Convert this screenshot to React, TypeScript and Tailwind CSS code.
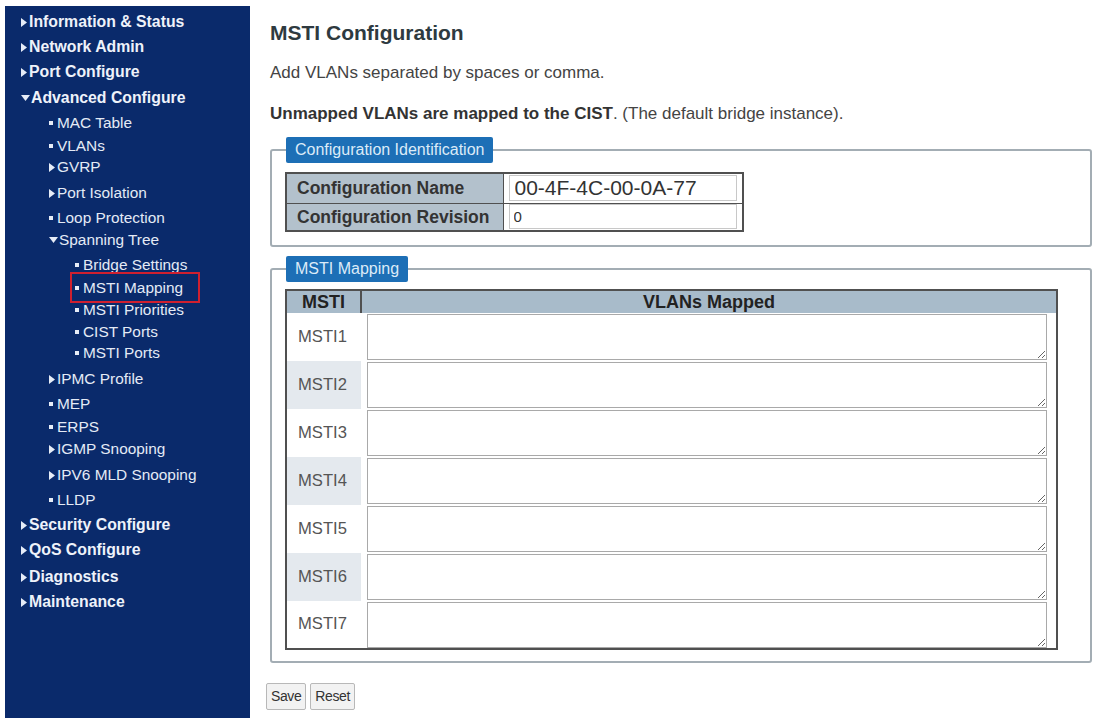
const font = "font-['Liberation_Sans',Arial,sans-serif]";

type NavItem = { label: string; level: 0 | 1 | 2; mark: 'right' | 'down' | 'dot'; mt: string; active?: boolean };

const nav: NavItem[] = [
  { label: 'Information & Status', level: 0, mark: 'right', mt: 'mt-0' },
  { label: 'Network Admin', level: 0, mark: 'right', mt: 'mt-[7px]' },
  { label: 'Port Configure', level: 0, mark: 'right', mt: 'mt-[7px]' },
  { label: 'Advanced Configure', level: 0, mark: 'down', mt: 'mt-[8px]' },
  { label: 'MAC Table', level: 1, mark: 'dot', mt: 'mt-[7px]' },
  { label: 'VLANs', level: 1, mark: 'dot', mt: 'mt-[5px]' },
  { label: 'GVRP', level: 1, mark: 'right', mt: 'mt-[3px]' },
  { label: 'Port Isolation', level: 1, mark: 'right', mt: 'mt-[8px]' },
  { label: 'Loop Protection', level: 1, mark: 'dot', mt: 'mt-[7px]' },
  { label: 'Spanning Tree', level: 1, mark: 'down', mt: 'mt-[4px]' },
  { label: 'Bridge Settings', level: 2, mark: 'dot', mt: 'mt-[7px]' },
  { label: 'MSTI Mapping', level: 2, mark: 'dot', mt: 'mt-[5px]', active: true },
  { label: 'MSTI Priorities', level: 2, mark: 'dot', mt: 'mt-[4px]' },
  { label: 'CIST Ports', level: 2, mark: 'dot', mt: 'mt-[4px]' },
  { label: 'MSTI Ports', level: 2, mark: 'dot', mt: 'mt-[3px]' },
  { label: 'IPMC Profile', level: 1, mark: 'right', mt: 'mt-[8px]' },
  { label: 'MEP', level: 1, mark: 'dot', mt: 'mt-[7px]' },
  { label: 'ERPS', level: 1, mark: 'dot', mt: 'mt-[5px]' },
  { label: 'IGMP Snooping', level: 1, mark: 'right', mt: 'mt-[4px]' },
  { label: 'IPV6 MLD Snooping', level: 1, mark: 'right', mt: 'mt-[8px]' },
  { label: 'LLDP', level: 1, mark: 'dot', mt: 'mt-[7px]' },
  { label: 'Security Configure', level: 0, mark: 'right', mt: 'mt-[7px]' },
  { label: 'QoS Configure', level: 0, mark: 'right', mt: 'mt-[7px]' },
  { label: 'Diagnostics', level: 0, mark: 'right', mt: 'mt-[9px]' },
  { label: 'Maintenance', level: 0, mark: 'right', mt: 'mt-[7px]' },
];

const indent = ['pl-[16px]', 'pl-[44px]', 'pl-[70px]'];

const Mark = ({ kind }: { kind: NavItem['mark'] }) => {
  if (kind === 'dot') return <span className="mr-[4px] inline-block h-[4px] w-[4px] bg-[#e6ecf7]" />;
  if (kind === 'down')
    return (
      <svg width="9" height="6" viewBox="0 0 9 6" className="mr-[1px]">
        <path d="M0 0 L9 0 L4.5 6 Z" fill="#e6ecf7" />
      </svg>
    );
  return (
    <svg width="6" height="9" viewBox="0 0 6 9" className="mr-[2px]">
      <path d="M0 0 L6 4.5 L0 9 Z" fill="#e6ecf7" />
    </svg>
  );
};

const Sidebar = () => (
  <nav className="ml-[5px] mt-[6px] h-[712px] w-[245px] shrink-0 bg-[#0a2a6b] pt-[7px]">
    {nav.map((item) => (
      <div key={item.label} className={`${item.mt} ${indent[item.level]} relative flex h-[18px] items-center`}>
        {item.active && (
          <span className="absolute left-[65px] top-[-7px] h-[31px] w-[130px] border-2 border-[#d0202f]" />
        )}
        <Mark kind={item.mark} />
        <span
          className={
            item.level === 0
              ? 'whitespace-nowrap text-[15.8px] font-bold text-[#eef2fa]'
              : 'whitespace-nowrap text-[15.4px] text-[#e4eaf6]'
          }
        >
          {item.label}
        </span>
      </div>
    ))}
  </nav>
);

const Legend = ({ children }: { children: string }) => (
  <legend className="ml-[1px] h-[26px] rounded-[2px] bg-[#1d6fb6] px-[9px] text-[16px] leading-[26px] text-[#dcebf8]">
    {children}
  </legend>
);

const msti = ['MSTI1', 'MSTI2', 'MSTI3', 'MSTI4', 'MSTI5', 'MSTI6', 'MSTI7'];

export default function App() {
  return (
    <div className={`${font} flex min-h-[720px] bg-white`}>
      <Sidebar />
      <main className="ml-[20px] w-[822px] pt-[21px] text-[#333]">
        <h1 className="text-[21px] font-bold leading-[24px] text-[#2e3a40]">MSTI Configuration</h1>
        <p className="mt-[18px] text-[17px] leading-[20px] text-[#444]">Add VLANs separated by spaces or comma.</p>
        <p className="mt-[21px] text-[17px] leading-[20px] text-[#444]">
          <span className="font-bold text-[#333]">Unmapped VLANs are mapped to the CIST</span>. (The default bridge
          instance).
        </p>

        <fieldset className="mt-[13px] rounded-[3px] border-2 border-[#a3adb4] px-[13px] pb-[13px] pt-[9px]">
          <Legend>Configuration Identification</Legend>
          <table className="border-collapse border-2 border-[#505050]">
            <tbody>
              <tr className="h-[30px]">
                <td className="w-[217px] border border-[#505050] bg-[#b3c1cc] pl-[10px] text-[17.5px] font-bold text-[#333]">
                  Configuration Name
                </td>
                <td className="w-[234px] border border-[#505050] bg-white px-[5px]">
                  <input
                    readOnly
                    value="00-4F-4C-00-0A-77"
                    className="h-[26px] w-[228px] border border-[#c8c8c8] px-[5px] text-[21px] leading-[24px] text-[#333] outline-none"
                  />
                </td>
              </tr>
              <tr className="h-[28px]">
                <td className="border border-[#505050] bg-[#b3c1cc] pl-[10px] text-[17.5px] font-bold text-[#333]">
                  Configuration Revision
                </td>
                <td className="border border-[#505050] bg-white px-[5px]">
                  <input
                    readOnly
                    value="0"
                    className="h-[25px] w-[228px] border border-[#c8c8c8] px-[4px] text-[15px] text-[#333] outline-none"
                  />
                </td>
              </tr>
            </tbody>
          </table>
        </fieldset>

        <fieldset className="mt-[9px] rounded-[3px] border-2 border-[#a3adb4] px-[13px] pb-[11px] pt-[7px]">
          <Legend>MSTI Mapping</Legend>
          <table className="w-[773px] border-collapse border-2 border-[#505050]">
            <thead>
              <tr className="h-[23px] bg-[#a8bbca] text-[18px] font-bold text-[#222]">
                <th className="w-[75px] border-r-2 border-[#505050] leading-[20px]">MSTI</th>
                <th className="leading-[20px]">VLANs Mapped</th>
              </tr>
            </thead>
            <tbody>
              {msti.map((m, i) => (
                <tr key={m} className="h-[48px]">
                  <td
                    className={`${i % 2 === 1 ? 'bg-[#e4e9ee]' : 'bg-white'} pl-[11px] text-[16.6px] text-[#555]`}
                  >
                    {m}
                  </td>
                  <td className="bg-white pl-[6px] pr-[9px] align-middle">
                    <textarea className="block h-[46px] w-full border border-[#a9a9a9] outline-none" />
                  </td>
                </tr>
              ))}
            </tbody>
          </table>
        </fieldset>

        <div className="-ml-[4px] mt-[20px] flex gap-[4px]">
          <button className="h-[27px] rounded-[2px] border border-[#b8b8b8] bg-[#f2f2f2] px-[4px] text-[14px] tracking-[-0.4px] text-[#333]">
            Save
          </button>
          <button className="h-[27px] rounded-[2px] border border-[#b8b8b8] bg-[#f2f2f2] px-[4px] text-[14px] tracking-[-0.4px] text-[#333]">
            Reset
          </button>
        </div>
      </main>
    </div>
  );
}
